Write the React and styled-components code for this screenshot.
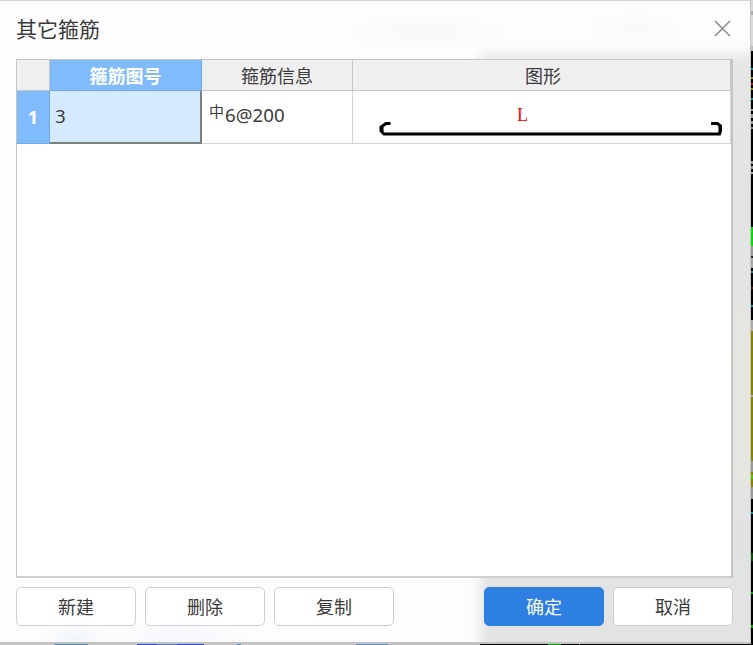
import styled, { createGlobalStyle } from "styled-components";
import { useState } from "react";

const GlobalStyle = createGlobalStyle`
    *{
        box-sizing: border-box;
    }
    body{
        margin: 0;
        overflow: hidden;
        font-family: "Noto Sans", "Noto Sans CJK SC", sans-serif;
        color: #3a3a3a;
    }
`;
const Desktop = styled.div`
    display: grid;
    grid-template-columns: 751px 2px;
    grid-template-rows: 644px 1px;
    width: 753px;
    height: 645px;
    background: #000;
`;
const RightEdge = styled.div`
    grid-row: 1 / 3;
    grid-column: 2;
    background: linear-gradient(
        #d8d8d8 0 11px, #aaa 11px 15px, #dadada 15px 46px, #bbb 46px 51px,
        #000 51px 68px, #098b95 68px 70px, #000 70px 77px, #8c8a08 77px 79px,
        #000 79px 83px, #b01212 83px 85px, #000 85px 88px, #8c8a08 88px 90px,
        #000 90px 98px, #098b95 98px 100px, #000 100px 109px, #999 109px 111px,
        #000 111px 114px, #999 114px 118px, #000 118px 121px, #999 121px 124px,
        #000 124px 127px, #888 127px 129px, #000 129px 161px, #999 161px 164px,
        #000 164px 166px, #999 166px 169px, #000 169px 172px, #aaa 172px 174px,
        #000 174px 227px, #04d904 227px 246px, #999 246px 256px, #222 256px 258px,
        #aaa 258px 268px, #000 268px 271px, #098b95 271px 273px, #000 273px 287px,
        #701010 287px 289px, #000 289px 305px, #098b95 305px 307px, #000 307px 320px,
        #aaa 320px 331px, #858300 331px 395px, #aaa 395px 397px, #858300 397px 461px,
        #999 461px 472px, #858300 472px 475px, #55c400 475px 479px, #858300 479px 487px,
        #999 487px 499px, #000 499px 512px, #098b95 512px 514px, #000 514px 553px,
        #064806 553px 561px, #000 561px 592px, #009c00 592px 594px, #000 594px 625px,
        #009c00 625px 628px, #000 628px
    );
`;
const BottomEdge = styled.div`
    background: linear-gradient(
        90deg,
        #c4c4c4 0 54px, #5089bd 54px 88px, #c4c4c4 88px 137px, #2449ce 137px 157px,
        #5b78c7 157px 177px, #2449ce 177px 204px, #c4c4c4 204px 237px, #508cc5 237px 241px,
        #c4c4c4 241px 356px, #5d8fc4 356px 388px, #bababa 388px 480px, #000 480px 548px,
        #00a900 548px 561px, #000 561px 579px, #777 579px 580px, #000 580px
    );
`;
const Dialog = styled.div`
    display: flex;
    flex-direction: column;
    padding: 0 17px 16px 16px;
    border-top: 1px solid #d2d2d2;
    border-right: 1px solid #c6c6c6;
    border-bottom: 2px solid #c2c2c2;
    position: relative;
    overflow: hidden;
    background:
        radial-gradient(ellipse 90px 20px at 425px 31px, #f8f8f8, transparent),
        radial-gradient(ellipse 55px 22px at 635px 29px, #f9f9f9, transparent),
        radial-gradient(ellipse 35px 22px at 75px 640px, #f0f5fa, transparent),
        radial-gradient(ellipse 80px 24px at 180px 640px, #f5f7fd, transparent),
        #fdfdfd;
    z-index: 0;
    &::before{
        content: "";
        position: absolute;
        z-index: -1;
        left: 480px;
        top: 53px;
        width: 300px;
        height: 630px;
        background: linear-gradient(#e6e6e6, #e2e3e4 25%, #e6e6e1 50%, #e6e6e1 65%, #e1e3e3 75%, #e3e4e3);
        filter: blur(6px);
    }
`;
const TitleBar = styled.header`
    display: flex;
    justify-content: space-between;
    height: 58px;
`;
const Title = styled.h1`
    margin: 0;
    padding-top: 13px;
    font-size: 21px;
    line-height: 30px;
    font-weight: 400;
`;
const CloseBtn = styled.button`
    display: flex;
    margin: 19px 2px 0 0;
    padding: 0;
    width: 17px;
    height: 17px;
    background: none;
    border: 0;
    cursor: pointer;
`;
const TableBox = styled.div`
    height: 519px;
    border: 1px solid #c5c5c5;
    border-width: 1px 2px 2px 1px;
    border-bottom-color: #cfcfcf;
    background: #fff;
`;
const Table = styled.div`
    display: grid;
    grid-template-columns: 33px 152px 151px 378px;
    grid-template-rows: 31px 53px;
`;
const HeadCell = styled.div`
    display: flex;
    align-items: center;
    justify-content: center;
    padding-top: 2px;
    border-right: 1px solid ${({ $active }) => ($active ? "#6ca9e9" : "#c5c5c5")};
    border-bottom: 1px solid ${({ $active }) => ($active ? "#6ca9e9" : "#c5c5c5")};
    background: ${({ $active }) => ($active ? "#80bbfb" : "#efefef")};
    color: ${({ $active }) => ($active ? "#fff" : "#3a3a3a")};
    font-size: 18px;
    line-height: 24px;
    font-weight: ${({ $active }) => ($active ? 700 : 400)};
    &.last{
        padding-left: 3px;
    }
    &.row-no{
        padding: 0 0 1px;
    }
`;
const Cell = styled.div`
    display: flex;
    align-items: center;
    padding: 0 0 4px 7px;
    border-right: 1px solid #d4d4d4;
    border-bottom: 1px solid #d4d4d4;
    font-size: 18.7px;
    line-height: 26px;
    &.active{
        padding: 0 0 1px 5px;
        background: #d5eafe;
        border-right: 2px solid #7f8082;
        border-bottom: 2px solid #7f8082;
    }
    &.shape{
        padding: 0;
    }
`;
const Grade = styled.span`
    margin: -8px 1px 0 0;
    font-size: 15px;
`;
const Buttons = styled.footer`
    display: flex;
    gap: 9px;
    padding-top: 9px;
`;
const Btn = styled.button`
    width: 120px;
    height: 39px;
    padding: 1px 0 0;
    border: 1px solid ${({ $primary }) => ($primary ? "#2d80e2" : "#cecece")};
    border-radius: 5px;
    background: ${({ $primary }) => ($primary ? "#2d80e2" : "#fff")};
    color: ${({ $primary }) => ($primary ? "#fff" : "#3a3a3a")};
    font-family: inherit;
    font-size: 18px;
    line-height: 24px;
    cursor: pointer;
    &.right{
        margin-left: auto;
    }
`;

function StirrupShape() {
    return (
        <svg width="377" height="52" viewBox="0 0 377 52">
            <text x="169.5" y="29.5" textAnchor="middle" fontFamily="Liberation Serif, serif" fontSize="18" fill="#f00">L</text>
            <path
                d="M37.5 32.5H33L28 36V40L31 43H366.5L367.5 40V35L364.5 32.5H358"
                fill="none"
                stroke="#000"
                strokeWidth="3"
            />
            <path d="M29.5 35V41M366.5 35V42" stroke="#000" strokeWidth="2" />
        </svg>
    );
}

export default function App() {
    const [rows] = useState([{ id: 1, shapeNo: "3", grade: "中", info: "6@200" }]);
    return (
        <>
            <GlobalStyle />
            <Desktop>
                <Dialog>
                    <TitleBar>
                        <Title>其它箍筋</Title>
                        <CloseBtn title="关闭">
                            <svg width="17" height="17" viewBox="0 0 17 17">
                                <path d="M1 1L16 16M16 1L1 16" stroke="#8b8b8b" strokeWidth="1.5" />
                            </svg>
                        </CloseBtn>
                    </TitleBar>
                    <TableBox>
                        <Table>
                            <HeadCell />
                            <HeadCell $active>箍筋图号</HeadCell>
                            <HeadCell>箍筋信息</HeadCell>
                            <HeadCell className="last">图形</HeadCell>
                            {rows.map(row => [
                                <HeadCell key="no" $active className="row-no">{row.id}</HeadCell>,
                                <Cell key="shapeNo" className="active">{row.shapeNo}</Cell>,
                                <Cell key="info"><Grade>{row.grade}</Grade>{row.info}</Cell>,
                                <Cell key="shape" className="shape"><StirrupShape /></Cell>
                            ])}
                        </Table>
                    </TableBox>
                    <Buttons>
                        <Btn>新建</Btn>
                        <Btn>删除</Btn>
                        <Btn>复制</Btn>
                        <Btn $primary className="right">确定</Btn>
                        <Btn>取消</Btn>
                    </Buttons>
                </Dialog>
                <RightEdge />
                <BottomEdge />
            </Desktop>
        </>
    );
}
